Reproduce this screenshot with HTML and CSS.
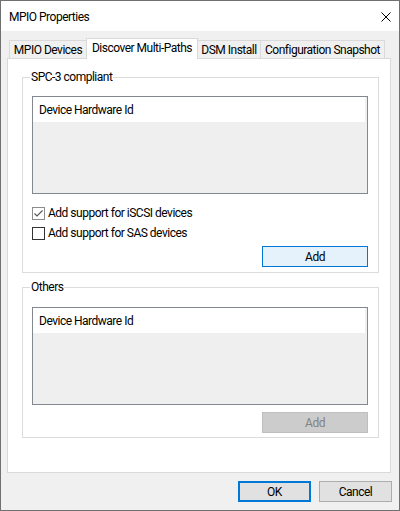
FILE: index.html
```html
<!DOCTYPE html>
<html lang="en">
<head>
    <meta charset="UTF-8">
    <title>MPIO Properties</title>
    <link rel="stylesheet" href="styles.css">
</head>
<body>
<div class="window">
    <div class="titlebar">
        <span class="title">MPIO Properties</span>
        <svg class="close" width="10" height="10" viewBox="0 0 10 10">
            <path d="M0.5 0.5 L9.5 9.5 M9.5 0.5 L0.5 9.5" stroke="#000" stroke-width="1" fill="none"/>
        </svg>
    </div>

    <div class="body">
        <div class="tabs">
            <div class="tab tab-devices">MPIO Devices</div>
            <div class="tab tab-discover selected">Discover Multi-Paths</div>
            <div class="tab tab-dsm">DSM Install</div>
            <div class="tab tab-snapshot">Configuration Snapshot</div>
        </div>

        <div class="panel">
            <fieldset class="group group-spc">
                <legend>SPC-3 compliant</legend>
                <div class="listbox">
                    <div class="list-header">Device Hardware Id</div>
                </div>
                <div class="checks">
                    <label class="check-row">
                        <span class="checkbox checked">
                            <svg width="11" height="11" viewBox="0 0 11 11">
                                <path d="M1.5 5.5 L4 8 L9.5 2.5" stroke="#555" stroke-width="1.1" fill="none"/>
                            </svg>
                        </span>
                        Add support for iSCSI devices
                    </label>
                    <label class="check-row">
                        <span class="checkbox"></span>
                        Add support for SAS devices
                    </label>
                </div>
                <div class="group-actions">
                    <button class="btn btn-add focused">Add</button>
                </div>
            </fieldset>

            <fieldset class="group group-others">
                <legend>Others</legend>
                <div class="listbox">
                    <div class="list-header">Device Hardware Id</div>
                </div>
                <div class="group-actions">
                    <button class="btn btn-add" disabled>Add</button>
                </div>
            </fieldset>
        </div>

        <div class="footer">
            <button class="btn btn-dialog default">OK</button>
            <button class="btn btn-dialog">Cancel</button>
        </div>
    </div>
</div>
</body>
</html>
```

FILE: styles.css
```css
* {
    box-sizing: border-box;
}
body {
    margin: 0;
    font-family: Roboto, "Noto Sans", sans-serif;
    font-size: 12px;
    letter-spacing: -0.5px;
    color: #000;
}
.window {
    width: 400px;
    height: 511px;
    border: 1px solid #707070;
    background-color: #f0f0f0;
    display: flex;
    flex-direction: column;
}
.titlebar {
    height: 30px;
    background-color: #fff;
    display: flex;
    align-items: center;
    justify-content: space-between;
    padding: 1px 8px 0 8px;
}
.title {
    font-size: 12px;
}
.body {
    padding: 7px 8px 0 6px;
}

/* tabs */
.tabs {
    display: flex;
    align-items: flex-end;
    padding-left: 2px;
    height: 20px;
}
.tab {
    height: 18px;
    border: 1px solid #d9d9d9;
    border-bottom: none;
    background-color: #f0f0f0;
    text-align: center;
    line-height: 18px;
    white-space: nowrap;
    margin-left: -1px;
}
.tab:first-child {
    margin-left: 0;
}
.tab-devices { width: 78px; }
.tab-discover { width: 112px; }
.tab-dsm { width: 64px; }
.tab-snapshot { width: 125px; }
.tab.selected {
    height: 21px;
    background-color: #fff;
    margin-bottom: -1px;
    position: relative;
    z-index: 1;
    line-height: 18px;
}

.panel {
    height: 415px;
    border: 1px solid #d9d9d9;
    background-color: #fff;
    padding: 10px 11px 0 14px;
}

/* group boxes */
.group {
    margin: 0;
    border: 1px solid #dcdcdc;
    padding: 0 10px 4px 9px;
    min-width: 0;
}
.group-spc {
    padding-bottom: 5px;
}
.group-others {
    margin-top: 6px;
}
.group legend {
    margin-left: -2px;
    padding: 1px 1px 0;
    line-height: 15px;
}
.listbox {
    height: 98px;
    border: 1px solid #828790;
    background-color: #efefef;
    margin-top: 11px;
}
.group-others .listbox {
    margin-top: 12px;
}
.list-header {
    height: 25px;
    margin-right: 2px;
    background-color: #fff;
    padding: 1px 0 0 6px;
    line-height: 24px;
}

.checks {
    margin-top: 9px;
}
.check-row {
    display: flex;
    align-items: center;
    height: 20px;
    white-space: nowrap;
}
.checkbox {
    width: 13px;
    height: 13px;
    border: 1px solid #333;
    background-color: #fff;
    margin-right: 3px;
    display: flex;
    align-items: center;
    justify-content: center;
}
.checkbox.checked {
    border-color: #8c8c8c;
}

.group-actions {
    display: flex;
    justify-content: flex-end;
    margin-top: 3px;
}
.group-others .group-actions {
    margin-top: 7px;
}

/* buttons */
.btn {
    font-family: inherit;
    font-size: 12px;
    letter-spacing: inherit;
    color: #000;
    height: 21px;
    border: 1px solid #adadad;
    background-color: #e1e1e1;
    padding: 0;
    line-height: 18px;
}
.btn-add {
    width: 106px;
}
.btn.focused {
    border-color: #0078d7;
    background-color: #e5f1fb;
}
.btn:disabled {
    border-color: #bfbfbf;
    background-color: #cccccc;
    color: #838383;
}
.footer {
    display: flex;
    justify-content: flex-end;
    gap: 8px;
    margin: 8px -1px 0 0;
}
.btn-dialog {
    width: 73px;
}
.btn.default {
    border: 2px solid #0078d7;
}
```
